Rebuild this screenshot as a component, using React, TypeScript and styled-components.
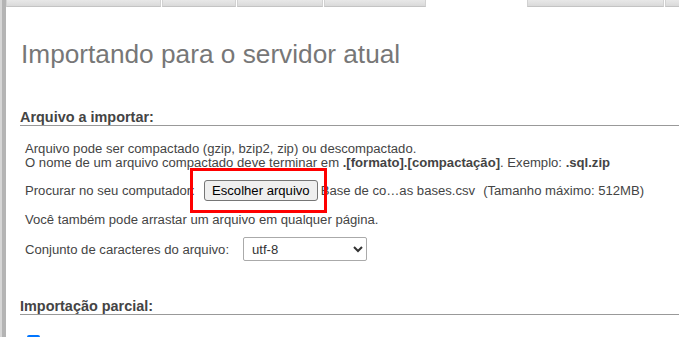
import React from "react"
import styled, { createGlobalStyle } from "styled-components"

const GlobalStyle = createGlobalStyle`
  html, body {
    margin: 0;
    padding: 0;
    background: #fff;
  }
  body {
    font-family: "Liberation Sans", Arial, sans-serif;
    font-size: 13.12px;
    color: #444;
  }
`

const Page = styled.div`
  position: relative;
  display: flex;
  height: 337px;
  overflow: hidden;
`

const SideBar = styled.div`
  flex: 0 0 4px;
  border-left: 2px solid #d6d6d6;
  background: #b4b4b4;
`

const Main = styled.div`
  flex: 1;
  display: flex;
  flex-direction: column;
  min-width: 0;
`

const TabStrip = styled.div`
  display: flex;
  gap: 1px;
  height: 7px;
  flex: 0 0 7px;
`

const Tab = styled.div<{ $w: number; $active?: boolean }>`
  flex: 0 0 ${p => p.$w}px;
  box-sizing: border-box;
  background: ${p => (p.$active ? "#fff" : "linear-gradient(#e8e8e8, #dadada)")};
  border: ${p => (p.$active ? "none" : "1px solid #d2d2d2")};
  border-top: none;
  border-bottom: ${p => (p.$active ? "none" : "1px solid #c4c4c4")};
`

const Content = styled.div`
  padding-left: 14px;
`

const Title = styled.h2`
  margin: 32.5px 0 0 1px;
  font-size: 26.24px;
  line-height: 29px;
  font-weight: normal;
  color: #777;
`

const Legend = styled.div<{ $top: number }>`
  margin-top: ${p => p.$top}px;
  font-size: 14.43px;
  line-height: 16px;
  font-weight: bold;
  color: #444;
  border-bottom: 1px solid #999;
`

const Body = styled.div`
  padding-left: 5px;
`

const Note = styled.div`
  margin-top: 15.5px;
  line-height: 14px;
`

const Row = styled.div<{ $top: number; $h: number }>`
  display: flex;
  align-items: center;
  margin-top: ${p => p.$top}px;
  height: ${p => p.$h}px;
  white-space: nowrap;
`

const Label = styled.span<{ $w: number }>`
  flex: 0 0 ${p => p.$w}px;
`

const FileButton = styled.button`
  height: 21px;
  box-sizing: border-box;
  padding: 0 7px;
  font-family: inherit;
  font-size: 13.12px;
  color: #000;
  background: #efefef;
  border: 1px solid #767676;
  border-radius: 3px;
`

const FileName = styled.span`
  margin-left: 3px;
  color: #444;
`

const Limit = styled.span`
  margin-left: 8px;
`

const Line = styled.div<{ $top: number }>`
  margin-top: ${p => p.$top}px;
  line-height: 14px;
`

const Select = styled.select`
  width: 124px;
  height: 24px;
  box-sizing: border-box;
  padding: 0 4px;
  font-family: inherit;
  font-size: 13.12px;
  color: #333;
  background: #fff;
  border: 1px solid #aaa;
  border-radius: 2px;
`

const Check = styled.input`
  display: block;
  margin: 20px 0 0 2px;
  width: 13px;
  height: 13px;
`

const Highlight = styled.div`
  position: absolute;
  left: 190px;
  top: 168px;
  width: 137px;
  height: 45px;
  box-sizing: border-box;
  border: 3px solid #f00;
  pointer-events: none;
`

const tabs = [
  { w: 155 },
  { w: 74 },
  { w: 86 },
  { w: 102 },
  { w: 99, active: true },
  { w: 137 },
  { w: 40 },
]

export default function App() {
  return (
    <>
      <GlobalStyle />
      <Page>
        <SideBar />
        <Main>
          <TabStrip>
            {tabs.map((t, i) => (
              <Tab key={i} $w={t.w} $active={t.active} />
            ))}
          </TabStrip>
          <Content>
            <Title>Importando para o servidor atual</Title>

            <Legend $top={40.5}>Arquivo a importar:</Legend>
            <Body>
              <Note>
                Arquivo pode ser compactado (gzip, bzip2, zip) ou descompactado.
                <br />
                O nome de um arquivo compactado deve terminar em <b>.[formato].[compactação]</b>. Exemplo: <b>.sql.zip</b>
              </Note>
              <Row $top={10.7} $h={21}>
                <Label $w={179}>Procurar no seu computador:</Label>
                <FileButton>Escolher arquivo</FileButton>
                <FileName>Base de co…as bases.csv</FileName>
                <Limit>(Tamanho máximo: 512MB)</Limit>
              </Row>
              <Line $top={11.5}>Você também pode arrastar um arquivo em qualquer página.</Line>
              <Row $top={10.5} $h={24}>
                <Label $w={218}>Conjunto de caracteres do arquivo:</Label>
                <Select defaultValue="utf-8">
                  <option value="utf-8">utf-8</option>
                </Select>
              </Row>
            </Body>

            <Legend $top={37}>Importação parcial:</Legend>
            <Body>
              <Check type="checkbox" defaultChecked />
            </Body>
          </Content>
        </Main>
        <Highlight />
      </Page>
    </>
  )
}
